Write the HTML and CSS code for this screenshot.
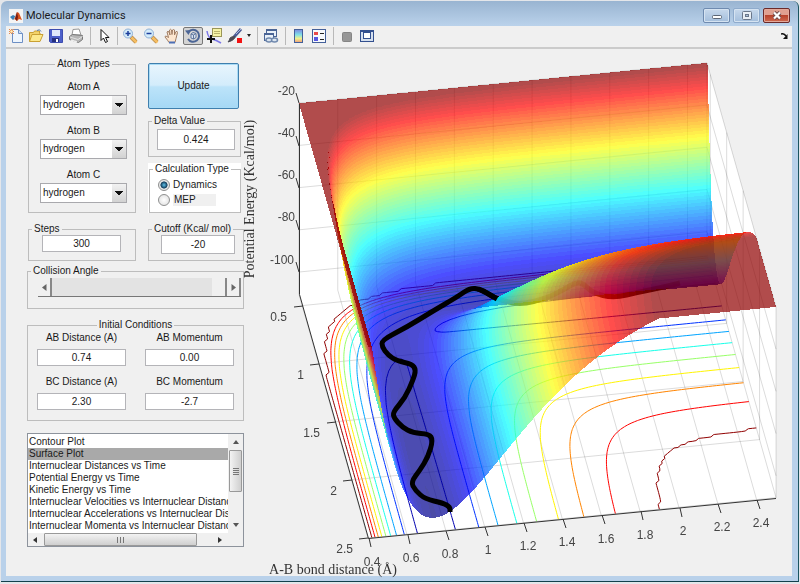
FILE: index.html
```html
<!DOCTYPE html>
<html lang="en">
<head>
    <meta charset="UTF-8">
    <meta name="viewport" content="width=device-width, initial-scale=1.0">
    <title>Molecular Dynamics</title>
    <link rel="stylesheet" href="styles.css">
</head>
<body>
    <div class="window">
        <header class="titlebar">
            <svg class="app-icon" width="14" height="14" viewBox="0 0 14 14">
                <rect width="14" height="14" fill="#f4f4f4"/>
                <path d="M1 8l3-2 2 1 2-4-3 7-1 1z" fill="#3b7fb5"/>
                <path d="M4 11l2-2 2-6 2 1 3 7-3-1-2 2-2-2z" fill="#d9541e"/>
                <path d="M8 3l1 5-1 4-2-2z" fill="#7a1c10"/>
            </svg>
            <h1>Molecular Dynamics</h1>
            <div class="caption-buttons">
                <button class="caption" aria-label="Minimize"><svg width="12" height="9" viewBox="0 0 12 9"><rect x="1.5" y="4.5" width="9" height="3" rx="1" fill="#fff" stroke="#5b6675"/></svg></button>
                <button class="caption dim" aria-label="Maximize"><svg width="12" height="9" viewBox="0 0 12 9"><rect x="1.5" y=".5" width="9" height="8" rx="1" fill="#e8eef5" stroke="#69768a"/><rect x="4.5" y="3.5" width="3" height="2" fill="#a9c0da" stroke="#69768a"/></svg></button>
                <button class="caption close" aria-label="Close"><svg width="12" height="9" viewBox="0 0 12 9"><path d="M3 1.500l6 6M9 1.500l-6 6" stroke="#6b4a4a" stroke-width="4"/><path d="M3 1.500l6 6M9 1.500l-6 6" stroke="#fff" stroke-width="2.2"/></svg></button>
            </div>
        </header>

        <div class="client">
            <nav class="toolbar">
                <div class="tools">
                    <button class="tool" aria-label="New Figure"><svg width="16" height="16" viewBox="0 0 16 16"><path d="M4.500 1.500h6l4 4v9h-10z" fill="#eef5fd" stroke="#6d8fc4"/><path d="M10.500 1.500v4h4" fill="#cfe0f5" stroke="#6d8fc4"/><path d="M3.500 1v5M1 3.500h5M1 1l5 5M6 1l-5 5" stroke="#e58a4e"/><circle cx="3.5" cy="3.5" r="1.2" fill="#fff3c0"/></svg></button>
                    <button class="tool" aria-label="Open File"><svg width="16" height="16" viewBox="0 0 16 16"><path d="M1.500 13.500v-9h4l1-1.500h5v2.500h1" fill="#f3d36a" stroke="#c9a033"/><path d="M1.500 13.500l2.500-7h11l-3 7z" fill="#fce98d" stroke="#c9a033"/><path d="M9 2.500q3-2 4 1" fill="none" stroke="#5b7fae"/></svg></button>
                    <button class="tool" aria-label="Save Figure"><svg width="16" height="16" viewBox="0 0 16 16"><path d="M1.500 1.500h13v13h-12l-1-1z" fill="#4c5fc9" stroke="#3c4cb0"/><rect x="4" y="2" width="8" height="6" fill="#dfe8fa"/><rect x="4" y="10" width="7" height="4" fill="#26307e"/><rect x="8" y="11" width="2" height="3" fill="#fff"/></svg></button>
                    <button class="tool" aria-label="Print Figure"><svg width="16" height="16" viewBox="0 0 16 16"><path d="M4 7l1-5.500 6-.5 2 6z" fill="#fff" stroke="#999"/><path d="M1.500 8.500l3-2 10 1v4l-4 3-9-3z" fill="#b6b6b6" stroke="#777"/><path d="M2 9l8 2.500 4.500-3" fill="none" stroke="#e2e2e2"/><path d="M3 12l6 2" stroke="#eee" stroke-width="1.5"/></svg></button>
                </div>
                <span class="sep"></span>
                <div class="tools">
                    <button class="tool" aria-label="Edit Plot"><svg width="16" height="16" viewBox="0 0 16 16"><path d="M5 1.500v11l2.500-2.500 2 4.500 2-1-2-4h3.500z" fill="#fff" stroke="#111"/></svg></button>
                </div>
                <span class="sep narrow"></span>
                <div class="tools spaced">
                    <button class="tool" aria-label="Zoom In"><svg width="16" height="16" viewBox="0 0 16 16"><path d="M9 9l5 5" stroke="#b98a48" stroke-width="4"/><path d="M9.500 9.500l5 5" stroke="#f5bd62" stroke-width="2.5"/><circle cx="6" cy="5.5" r="4.5" fill="#d4ecfa" stroke="#8fb0d6"/><path d="M3.500 5.500h5M6 3v5" stroke="#1c3e9c" stroke-width="1.5"/></svg></button>
                    <button class="tool" aria-label="Zoom Out"><svg width="16" height="16" viewBox="0 0 16 16"><path d="M9 9l5 5" stroke="#b98a48" stroke-width="4"/><path d="M9.500 9.500l5 5" stroke="#f5bd62" stroke-width="2.5"/><circle cx="6" cy="5.5" r="4.5" fill="#d4ecfa" stroke="#8fb0d6"/><path d="M3.500 5.500h5" stroke="#1c3e9c" stroke-width="1.5"/></svg></button>
                    <button class="tool" aria-label="Pan"><svg width="16" height="16" viewBox="0 0 16 16"><path d="M5 14.500q-1-2-4-5.500 0-2 3.500 .5L3 4q1-1.500 2 0l1 3-.5-5q1-1.500 2 0l.5 4.500.5-4.500q1-1 2 0l0 5 1.500-3.500q1.500-.5 1.500 1l-1.500 6-1 4z" fill="#fde6cf" stroke="#a07c62"/><path d="M5 14.500h6" stroke="#4c6fb5" stroke-width="2"/></svg></button>
                    <button class="tool pressed" aria-label="Rotate 3D"><svg width="16" height="16" viewBox="0 0 16 16"><path d="M3.500 4a6 6 0 1 1-.5 7" fill="none" stroke="#4b6596" stroke-width="2"/><path d="M0 2.500l6-.5-2.500 5z" fill="#4b6596"/><path d="M6 6l2-1.500 3 1v4l-2.500 1.500L6 10zM6 6l2.500 1 2.500-1.500M8.500 7v4" fill="#dce5f2" stroke="#5e779f"/></svg></button>
                    <button class="tool" aria-label="Data Cursor"><svg width="16" height="16" viewBox="0 0 16 16"><path d="M1 3q1 7 5 8t9 4" fill="none" stroke="#7c78e8" stroke-width="1.5"/><rect x="6.5" y=".5" width="9" height="8" fill="#f6f3a4" stroke="#9a9558"/><path d="M8 3.500h6M8 5.500h6" stroke="#b9b36c"/><path d="M5 7v8M1 11h8" stroke="#111" stroke-width="2"/></svg></button>
                    <button class="tool" aria-label="Brush"><svg width="16" height="16" viewBox="0 0 16 16"><path d="M14 1L7 9" stroke="#4a5b94" stroke-width="3"/><path d="M14 1L9 6" stroke="#a9b7dc"/><path d="M8 8.500Q8 12 1 14q2-2 2-4 2-2 5-1.500z" fill="#4b4b55" stroke="#4b4b55"/><rect x="10" y="10" width="5" height="5" fill="#f21212"/></svg></button>
                </div>
                <button class="brush-menu" aria-label="Brush options"><svg width="6" height="4" viewBox="0 0 6 4"><path d="M1 0h4l-2 3z" fill="#222"/></svg></button>
                <span class="sep"></span>
                <div class="tools">
                    <button class="tool" aria-label="Link Plot"><svg width="16" height="16" viewBox="0 0 16 16"><rect x="3.5" y="1.5" width="10" height="7" fill="#eaf1f9" stroke="#4b6596"/><path d="M3 2h11" stroke="#4b6596" stroke-width="2"/><rect x="1.5" y="5.5" width="9" height="7" fill="#eaf1f9" stroke="#4b6596"/><path d="M1 6h10" stroke="#4b6596" stroke-width="2"/><ellipse cx="6" cy="12" rx="3" ry="2" fill="#dbe5f0" stroke="#6f88ad" stroke-width="1.5"/><ellipse cx="11.5" cy="12" rx="3" ry="2" fill="#dbe5f0" stroke="#6f88ad" stroke-width="1.5"/></svg></button>
                </div>
                <span class="sep"></span>
                <div class="tools">
                    <button class="tool" aria-label="Insert Colorbar"><svg width="16" height="16" viewBox="0 0 16 16"><defs><linearGradient id="bar" x2="0" y2="1"><stop offset="0" stop-color="#7f86e0"/><stop offset=".4" stop-color="#7fe0e8"/><stop offset=".7" stop-color="#f2f08a"/><stop offset="1" stop-color="#ef9a7a"/></linearGradient></defs><rect x="3.5" y="1.5" width="8" height="13" fill="url(#bar)" stroke="#44609a"/></svg></button>
                    <button class="tool" aria-label="Insert Legend"><svg width="16" height="16" viewBox="0 0 16 16"><rect x="1.5" y="1.5" width="13" height="13" fill="#f7f9fc" stroke="#44609a"/><rect x="3" y="4" width="4" height="3" fill="#e9494b"/><rect x="3" y="9" width="4" height="4" fill="#5757e2"/><path d="M9 5.500h4M9 11.500h4" stroke="#222"/></svg></button>
                </div>
                <span class="sep"></span>
                <div class="tools">
                    <button class="tool" aria-label="Hide Plot Tools"><svg width="16" height="16" viewBox="0 0 16 16"><rect x="3.5" y="4.5" width="9" height="9" rx="1" fill="#979797" stroke="#858585"/></svg></button>
                    <button class="tool" aria-label="Show Plot Tools"><svg width="16" height="16" viewBox="0 0 16 16"><rect x="1.5" y="2.5" width="13" height="11" fill="#d5e0ee" stroke="#33508f"/><path d="M1 3h14" stroke="#33508f" stroke-width="2"/><rect x="4.5" y="4.5" width="7" height="6" fill="#fff" stroke="#33508f"/></svg></button>
                </div>
                <button class="undock" aria-label="Dock Figure"><svg width="7" height="6" viewBox="0 0 7 6"><path d="M0 1q3-1 5 2" fill="none" stroke="#111" stroke-width="1.5"/><path d="M6.500 1v5H2z" fill="#111"/></svg></button>
            </nav>

            <main class="figure">
                <form class="controls">
                    <div class="setup">
                        <fieldset class="atoms">
                            <legend>Atom Types</legend>
                            <label for="atomA">Atom A</label>
                            <span class="dropdown"><select id="atomA"><option>hydrogen</option></select></span>
                            <label for="atomB">Atom B</label>
                            <span class="dropdown"><select id="atomB"><option>hydrogen</option></select></span>
                            <label for="atomC">Atom C</label>
                            <span class="dropdown"><select id="atomC"><option>hydrogen</option></select></span>
                        </fieldset>

                        <div class="run">
                            <button type="button" class="update">Update</button>
                            <fieldset class="delta">
                                <legend>Delta Value</legend>
                                <div class="field"><input type="text" value="0.424" aria-label="Delta Value"></div>
                            </fieldset>
                            <div class="calc-box">
                                <fieldset class="calc">
                                    <legend>Calculation Type</legend>
                                    <div class="field">
                                        <label><input type="radio" name="calc" checked>Dynamics</label>
                                        <label><input type="radio" name="calc"><span class="mep">MEP</span></label>
                                    </div>
                                </fieldset>
                            </div>
                        </div>

                        <fieldset class="steps">
                            <legend>Steps</legend>
                            <div class="field"><input type="text" value="300" aria-label="Steps"></div>
                        </fieldset>
                        <fieldset class="cutoff">
                            <legend>Cutoff (Kcal/ mol)</legend>
                            <div class="field"><input type="text" value="-20" aria-label="Cutoff (Kcal/ mol)"></div>
                        </fieldset>
                    </div>

                    <fieldset class="angle">
                        <legend>Collision Angle</legend>
                        <div class="field">
                            <div class="slider">
                                <button type="button" aria-label="Decrease angle"><svg width="5" height="7" viewBox="0 0 5 7"><path d="M4.500 0v7L0 3.500z" fill="#666"/></svg></button>
                                <input type="range" min="0" max="180" value="180" aria-label="Collision Angle">
                                <button type="button" aria-label="Increase angle"><svg width="5" height="7" viewBox="0 0 5 7"><path d="M.5 0v7L5 3.500z" fill="#666"/></svg></button>
                            </div>
                        </div>
                    </fieldset>

                    <fieldset class="initial">
                        <legend>Initial Conditions</legend>
                        <div class="conditions">
                            <p><label for="abDist">AB Distance (A)</label><input type="text" id="abDist" value="0.74"></p>
                            <p><label for="abMom">AB Momentum</label><input type="text" id="abMom" value="0.00"></p>
                            <p><label for="bcDist">BC Distance (A)</label><input type="text" id="bcDist" value="2.30"></p>
                            <p><label for="bcMom">BC Momentum</label><input type="text" id="bcMom" value="-2.7"></p>
                        </div>
                    </fieldset>

                    <div class="plot-list">
                        <select size="8" aria-label="Plot type">
                            <option>Contour Plot</option>
                            <option selected>Surface Plot</option>
                            <option>Internuclear Distances vs Time</option>
                            <option>Potential Energy vs Time</option>
                            <option>Kinetic Energy vs Time</option>
                            <option>Internuclear Velocities vs Internuclear Distance</option>
                            <option>Internuclear Accelerations vs Internuclear Distance</option>
                            <option>Internuclear Momenta vs Internuclear Distance</option>
                        </select>
                        <div class="vbar">
                            <svg width="6" height="4" viewBox="0 0 6 4"><path d="M0 4h6L3 0z" fill="#555"/></svg>
                            <span class="vthumb"></span>
                            <svg class="down" width="6" height="4" viewBox="0 0 6 4"><path d="M0 0h6L3 4z" fill="#555"/></svg>
                        </div>
                        <div class="hbar">
                            <svg width="4" height="6" viewBox="0 0 4 6"><path d="M4 0v6L0 3z" fill="#333"/></svg>
                            <span class="hthumb"></span>
                            <svg class="right" width="4" height="6" viewBox="0 0 4 6"><path d="M0 0v6l4-3z" fill="#333"/></svg>
                        </div>
                    </div>
                </form>

                <div class="plot">
                    <canvas id="surface" width="548" height="527"></canvas>
                    <svg class="axes" viewBox="244 49 548 527" preserveAspectRatio="xMinYMin meet">
                        <path class="axis" d="M299.500 104V294.500L368.500 538.500L776 498.500"/>
                        <!-- z ticks -->
                        <path class="axis" d="M299 103l-3-10M299 146l-3-10M299 188l-3-10M299 230l-3-10M299 272l-3-10"/>
                        <!-- BC ticks -->
                        <path class="axis" d="M303 306l-9 1M319 364l-9 1M336 422l-9 1M352 480l-9 1M368 538l-9 1"/>
                        <!-- AB ticks -->
                        <path class="axis" d="M369 538l2 9M408 535l2 9M446 531l3 9M485 527l3 9M524 523l3 9M563 519l3 9M602 515l3 9M641 511l2 9M680 508l2 9M718 504l3 9M757 500l3 9"/>
                        <g class="ticks end">
                            <text x="295" y="95">-20</text>
                            <text x="295" y="137">-40</text>
                            <text x="295" y="179">-60</text>
                            <text x="295" y="221">-80</text>
                            <text x="294" y="264">-100</text>
                            <text x="287" y="321">0.5</text>
                            <text x="304" y="379">1</text>
                            <text x="320" y="437">1.5</text>
                            <text x="337" y="495">2</text>
                            <text x="353" y="553">2.5</text>
                        </g>
                        <g class="ticks">
                            <text x="372" y="566">0.4</text>
                            <text x="411" y="562">0.6</text>
                            <text x="450" y="558">0.8</text>
                            <text x="488" y="554">1</text>
                            <text x="528" y="550">1.2</text>
                            <text x="567" y="546">1.4</text>
                            <text x="606" y="543">1.6</text>
                            <text x="645" y="539">1.8</text>
                            <text x="683" y="535">2</text>
                            <text x="722" y="531">2.2</text>
                            <text x="761" y="527">2.4</text>
                        </g>
                        <text class="axis-label" x="333" y="574">A-B bond distance (Å)</text>
                        <text class="axis-label" transform="translate(254 199) rotate(-90)">Potential Energy (Kcal/mol)</text>
                    </svg>
                </div>
            </main>
        </div>
    </div>

    <script src="surface.js"></script>
</body>
</html>
```

FILE: styles.css
```css
* {
    box-sizing: border-box;
}
body {
    margin: 0;
    height: 100vh;
    padding: 1px 1px 2px 1px;
    background: #e4e6ea;
    font-family: "Liberation Sans", Arial, sans-serif;
    font-size: 10px;
    line-height: 12px;
    color: #1a1a1a;
    overflow: hidden;
}
button {
    padding: 0;
    border: none;
    background: none;
    font: inherit;
    color: inherit;
    display: flex;
    align-items: center;
    justify-content: center;
}
.window {
    height: 100%;
    display: flex;
    flex-direction: column;
    padding: 0 6px 5px 5px;
    background: linear-gradient(#99b4d1, #b9d1ea 24px);
    border-right: 1px solid #1b5560;
    border-bottom: 1px solid #12404c;
    border-radius: 6px 6px 0 0;
}

/* title bar */
.titlebar {
    height: 25px;
    display: flex;
    align-items: center;
    padding: 4px 2px 0 3px;
    gap: 3px;
}
.titlebar h1 {
    flex: 1;
    margin: 0;
    font-family: Roboto, sans-serif;
    font-size: 11px;
    font-weight: 400;
    line-height: 14px;
}
.caption-buttons {
    display: flex;
    gap: 3px;
}
.caption {
    width: 27px;
    height: 15px;
    border: 1px solid #6f8bb0;
    border-radius: 2px;
    background: linear-gradient(#c8d9ec, #a3bedc);
    box-shadow: inset 0 0 0 1px #d5e3f1;
}
.caption.dim {
    border-color: #8fabcc;
}
.caption.close {
    border-color: #6b2a2a;
    background: linear-gradient(#e0a090 45%, #b8432c 50%, #cf6a50);
    box-shadow: inset 0 0 0 1px #e3a99b;
}

/* toolbar */
.client {
    flex: 1;
    min-height: 0;
    display: flex;
    flex-direction: column;
    background: #f0f0f0;
}
.toolbar {
    height: 23px;
    display: flex;
    align-items: center;
    padding-bottom: 1px;
    border-bottom: 2px solid #cbcbcb;
}
.tools {
    display: flex;
}
.tools.spaced {
    gap: 1px;
}
.tool {
    width: 20px;
    height: 18px;
}
.tool.pressed {
    border: 1px solid #777;
    border-radius: 2px;
    background: #d4d4d4;
}
.sep {
    width: 8px;
    height: 18px;
    background: linear-gradient(#b9b9b9, #b9b9b9) center / 1px 100% no-repeat;
}
.sep.narrow {
    width: 6px;
}
.brush-menu {
    width: 8px;
}
.undock {
    margin-left: auto;
    padding-right: 4px;
}

/* controls */
.figure {
    flex: 1;
    min-height: 0;
    display: flex;
}
.controls {
    width: 238px;
    padding: 9px 0 0 21px;
}
fieldset {
    margin: 0;
    padding: 0;
    min-width: 0;
    border: 1px solid #bdbdbd;
}
legend {
    padding: 0 2px;
    margin-left: 3px;
    white-space: nowrap;
}
input[type="text"] {
    display: block;
    width: 100%;
    height: 17px;
    padding: 0;
    border: 1px solid #b4b4b8;
    background: #fff;
    font: inherit;
    color: inherit;
    text-align: center;
}
.setup {
    display: grid;
    grid-template-columns: 108px 93px;
    gap: 10px 12px;
    padding-left: 1px;
}
.atoms {
    display: flex;
    flex-direction: column;
    align-items: center;
    padding: 11px 8px 8px 11px;
}
.atoms legend,
.initial legend {
    margin: 0 auto;
}
.atoms label + .dropdown {
    margin-top: 2px;
}
.dropdown + label {
    margin-top: 10px;
}
.dropdown {
    display: grid;
    grid-template-columns: 1fr 14px;
    width: 100%;
    height: 20px;
    border: 1px solid #a9a9ad;
    background: #fff;
}
.dropdown::after {
    content: "";
    grid-area: 1 / 2;
    pointer-events: none;
    background:
        conic-gradient(from -45deg at 4px 4px, #111 90deg, transparent 0) center / 8px 4px no-repeat,
        linear-gradient(#f2f2f2, #d2d2d2);
}
.dropdown select {
    grid-area: 1 / 1 / 2 / 3;
    appearance: none;
    border: none;
    padding: 0 2px;
    background: none;
    font: inherit;
    color: inherit;
}
.run {
    display: flex;
    flex-direction: column;
    gap: 6px;
    padding-top: 5px;
}
.update {
    width: 91px;
    height: 46px;
    border: 1px solid #3f7fae;
    border-radius: 2px;
    background: linear-gradient(#e8f5fd, #d3ecfb 48%, #bce3f9 52%, #a5d8f5);
    box-shadow: inset 0 0 0 1px #a9dbf5;
}
.delta .field {
    padding: 2px 5px 6px 8px;
}
.delta input {
    height: 21px;
}
.calc-box {
    height: 50px;
    padding-left: 1px;
    background: #fff;
}
.calc {
    height: 50px;
}
.calc .field {
    padding: 2px 8px 0;
}
.calc label {
    display: flex;
    align-items: center;
    gap: 3px;
    height: 15px;
}
.calc input {
    appearance: none;
    width: 12px;
    height: 12px;
    margin: 0;
    border: 1px solid #8e8f8f;
    border-radius: 50%;
    background: radial-gradient(#fff, #dcdcdc);
}
.calc input:checked {
    background: radial-gradient(#5fc2ea, #123d5c 45%, #e8e8e8 55%);
}
.calc .mep {
    flex: 1;
    margin-right: 16px;
    padding: 0 1px;
    background: #f0f0f0;
}
.steps .field {
    padding: 0 14px 8px 13px;
}
.cutoff {
    margin-right: -3px;
}
.cutoff .field {
    padding: 0 8px 6px 12px;
}
.cutoff input {
    height: 19px;
}

.angle {
    margin-top: 4px;
}
.angle .field {
    padding: 1px 2px 11px 10px;
}
.slider {
    display: flex;
    height: 19px;
    border-bottom: 1px solid #777;
}
.slider button {
    width: 14px;
    border-right: 2px solid #888;
    background: #f0f0f0;
}
.slider input {
    flex: 1;
    min-width: 0;
    height: 18px;
    margin: 0;
    appearance: none;
    background: #e3e3e3;
}
.slider input::-webkit-slider-thumb {
    appearance: none;
    width: 15px;
    height: 18px;
    background: #f0f0f0;
    border-right: 2px solid #888;
}

.initial {
    margin-top: 10px;
    padding: 1px 9px 10px 9px;
}
.conditions {
    display: grid;
    grid-template-columns: 1fr 1fr;
    gap: 10px 19px;
}
.conditions p {
    display: flex;
    flex-direction: column;
    gap: 5px;
    margin: 0;
    text-align: center;
}

/* list box */
.plot-list {
    display: grid;
    grid-template-columns: 1fr 15px;
    grid-template-rows: 99px 13px;
    margin-top: 12px;
    border: 1px solid #8d939c;
    background: #f0f0f0;
}
.plot-list select {
    appearance: none;
    min-width: 0;
    width: 100%;
    height: 99px;
    padding: 2px 0 0 0;
    border: none;
    border-radius: 0;
    outline: none;
    background: #fff;
    font: inherit;
    color: inherit;
    overflow: hidden;
}
.plot-list option {
    min-height: 12px;
    padding: 0 1px;
    line-height: 12px;
}
.plot-list option:checked {
    background: #a9a9a9 linear-gradient(#a9a9a9, #a9a9a9);
    color: #1a1a1a;
}
.vbar {
    display: flex;
    flex-direction: column;
    align-items: center;
    padding: 6px 1px;
    gap: 6px;
}
.vbar .down {
    margin-top: auto;
}
.vthumb {
    width: 13px;
    height: 42px;
    border: 1px solid #999;
    border-radius: 1px;
    background:
        repeating-linear-gradient(#777 0 1px, transparent 1px 2px) center / 6px 7px no-repeat,
        linear-gradient(90deg, #f3f3f3, #cfcfcf);
}
.hbar {
    display: flex;
    align-items: center;
    padding: 0 6px 0 5px;
    gap: 7px;
}
.hbar .right {
    margin-left: auto;
}
.hthumb {
    width: 153px;
    height: 13px;
    border: 1px solid #999;
    border-radius: 1px;
    background:
        repeating-linear-gradient(90deg, #777 0 1px, transparent 1px 3px) center / 8px 6px no-repeat,
        linear-gradient(#f3f3f3, #cfcfcf);
}

/* plot: svg axes stacked on the canvas */
.plot {
    flex: 1;
    min-width: 0;
    display: grid;
}
.plot canvas,
.plot svg {
    grid-area: 1 / 1;
    width: 100%;
    height: 100%;
    min-height: 0;
    object-fit: contain;
    object-position: left top;
    overflow: visible;
}
.axis {
    fill: none;
    stroke: #333;
    stroke-width: 1;
}
.ticks {
    font-size: 12px;
    fill: #444;
    text-anchor: middle;
}
.ticks.end {
    text-anchor: end;
}
.axis-label {
    font-family: "Liberation Serif", serif;
    font-size: 14px;
    fill: #333;
    text-anchor: middle;
}
```

FILE: surface.js
```js
// LEPS potential energy surface for a collinear A + BC system
const canvas = document.getElementById('surface');
const ctx = canvas.getContext('2d');

const RMIN = 0.4, RMAX = 2.5, ZMIN = -110.4, CUTOFF = -20;
const D = 104, BETA = 2.0, RE = 0.742, SATO = 0.18;

function pair(r) {
    const e = Math.exp(-BETA * (r - RE));
    const singlet = D * (e * e - 2 * e) * (1 + SATO);
    const triplet = D / 2 * (e * e + 2 * e) * (1 - SATO);
    return { q: (singlet + triplet) / 2, j: (singlet - triplet) / 2 };
}

function energy(x, y) {
    const a = pair(x), b = pair(y), c = pair(x + y);
    const s = (a.j - b.j) ** 2 + (b.j - c.j) ** 2 + (c.j - a.j) ** 2;
    const v = (a.q + b.q + c.q - Math.sqrt(s / 2)) / (1 + SATO);
    return Math.min(v, CUTOFF);
}

function project(x, y, z) {
    return [
        124 + 194.3 * (x - RMIN) - 32.9 * (RMAX - y),
        489 - 19.2 * (x - RMIN) - 116.2 * (RMAX - y) - 2.11 * (z - ZMIN)
    ];
}

function jet(t) {
    t = Math.round(Math.max(0, Math.min(1, t)) * 63) / 63;
    const f = c => 255 * Math.max(0, Math.min(1, 1.5 - Math.abs(4 * t - c)));
    return [f(3), f(2), f(1)];
}

const colour = z => jet((z + 104.5) / 85.7);

function line(points) {
    ctx.beginPath();
    points.forEach(p => ctx.lineTo(p[0], p[1]));
    ctx.stroke();
}

function drawBox() {
    const corners = [
        project(RMIN, RMIN, CUTOFF), project(RMAX, RMIN, CUTOFF), project(RMAX, RMAX, CUTOFF),
        project(RMAX, RMAX, ZMIN), project(RMIN, RMAX, ZMIN), project(RMIN, RMIN, ZMIN)
    ];
    ctx.fillStyle = '#fff';
    ctx.beginPath();
    corners.forEach(p => ctx.lineTo(p[0], p[1]));
    ctx.fill();

    ctx.strokeStyle = 'rgba(0, 0, 0, 0.14)';
    for (let x = 0.4; x < 2.51; x += 0.2) {
        line([project(x, RMAX, ZMIN), project(x, RMIN, ZMIN), project(x, RMIN, CUTOFF)]);
    }
    for (let y = 0.5; y < 2.51; y += 0.5) {
        line([project(RMIN, y, ZMIN), project(RMAX, y, ZMIN), project(RMAX, y, CUTOFF)]);
    }
    for (let z = -100; z <= -20; z += 20) {
        line([project(RMIN, RMIN, z), project(RMAX, RMIN, z), project(RMAX, RMAX, z)]);
    }
    line([project(RMAX, RMIN, CUTOFF), project(RMAX, RMIN, ZMIN), project(RMAX, RMAX, ZMIN)]);
}

function sample(n) {
    const axis = i => RMIN + (RMAX - RMIN) * i / n;
    const z = [];
    for (let i = 0; i <= n; i++) {
        z.push([]);
        for (let j = 0; j <= n; j++) {
            z[i].push(energy(axis(i), axis(j)));
        }
    }
    return { n, axis, z };
}

function drawContour({ n, axis, z }, level) {
    ctx.strokeStyle = `rgb(${colour(level).join()})`;
    ctx.beginPath();
    for (let i = 0; i < n; i++) {
        for (let j = 0; j < n; j++) {
            const sq = [[i, j], [i + 1, j], [i + 1, j + 1], [i, j + 1]];
            const hits = [];
            for (let k = 0; k < 4; k++) {
                const [a, b] = sq[k], [p, q] = sq[(k + 1) % 4];
                const z0 = z[a][b], z1 = z[p][q];
                if ((z0 < level) !== (z1 < level)) {
                    const t = (level - z0) / (z1 - z0);
                    hits.push(project(axis(a + (p - a) * t), axis(b + (q - b) * t), ZMIN));
                }
            }
            for (let k = 0; k + 1 < hits.length; k += 2) {
                ctx.moveTo(...hits[k]);
                ctx.lineTo(...hits[k + 1]);
            }
        }
    }
    ctx.stroke();
}

// fill one triangle into the image with the energy interpolated per pixel
function triangle(img, a, b, c) {
    const area = (b[0] - a[0]) * (c[1] - a[1]) - (c[0] - a[0]) * (b[1] - a[1]);
    if (area === 0) return;
    const ys = [a[1], b[1], c[1]];
    const y0 = Math.ceil(Math.min(...ys) - 0.5), y1 = Math.ceil(Math.max(...ys) - 0.5);
    for (let y = y0; y < y1; y++) {
        const py = y + 0.5, xs = [];
        [[a, b], [b, c], [c, a]].forEach(([p, q]) => {
            // order the ends so a shared edge gives the same crossing both times
            if (p[1] > q[1]) [p, q] = [q, p];
            if (p[1] <= py && q[1] > py) {
                xs.push(p[0] + (q[0] - p[0]) * (py - p[1]) / (q[1] - p[1]));
            }
        });
        if (xs.length < 2) continue;
        const x0 = Math.ceil(Math.min(...xs) - 0.5), x1 = Math.ceil(Math.max(...xs) - 0.5);
        for (let x = x0; x < x1; x++) {
            const px = x + 0.5;
            const v = ((px - a[0]) * (c[1] - a[1]) - (c[0] - a[0]) * (py - a[1])) / area;
            const w = ((b[0] - a[0]) * (py - a[1]) - (px - a[0]) * (b[1] - a[1])) / area;
            const rgb = colour(a[2] + v * (b[2] - a[2]) + w * (c[2] - a[2]));
            const o = 4 * (y * img.width + x);
            for (let k = 0; k < 3; k++) {
                img.data[o + k] = 0.7 * rgb[k] + 0.3 * img.data[o + k];
            }
            img.data[o + 3] = 255;
        }
    }
}

function drawRows({ n, axis, z }, from, to) {
    const img = ctx.getImageData(0, 0, canvas.width, canvas.height);
    const point = (i, j) => [...project(axis(i), axis(j), z[i][j]), z[i][j]];
    for (let j = from; j < to; j++) {
        for (let i = n - 1; i >= 0; i--) {
            const a = point(i, j), b = point(i + 1, j), c = point(i + 1, j + 1), d = point(i, j + 1);
            triangle(img, a, b, c);
            triangle(img, a, c, d);
        }
    }
    ctx.putImageData(img, 0, 0);
}

function drawPath(points) {
    ctx.strokeStyle = '#000';
    ctx.lineWidth = 5;
    ctx.lineJoin = 'round';
    ctx.beginPath();
    ctx.moveTo(...points[0]);
    for (let i = 1; i < points.length - 1; i++) {
        const [x, y] = points[i], [nx, ny] = points[i + 1];
        ctx.quadraticCurveTo(x, y, (x + nx) / 2, (y + ny) / 2);
    }
    ctx.lineTo(...points[points.length - 1]);
    ctx.stroke();
    ctx.lineWidth = 1;
}

// trajectory: the approach runs behind the ridge, the rest in front
const approach = [
    [436, 234], [416, 239], [395, 243], [370, 249], [348, 244], [336, 231], [319, 241],
    [303, 249], [276, 256], [253, 250], [243, 244], [234, 240]
];
const vibration = [
    [253, 250], [243, 244], [236, 240], [226, 239], [213, 248], [189, 262], [163, 278], [138, 291],
    [138, 298], [144, 306], [153, 312], [168, 315], [172, 321], [169, 331], [161, 349],
    [149, 363], [150, 369], [158, 378], [169, 384], [185, 385], [189, 391], [184, 408],
    [176, 421], [167, 433], [171, 441], [181, 450], [199, 454], [206, 458], [206, 463]
];

drawBox();
const coarse = sample(105);
for (let level = -100; level <= -30; level += 10) {
    drawContour(coarse, level);
}
drawContour(coarse, CUTOFF - 0.01);

const fine = sample(210);
drawRows(fine, 0, 48);
drawPath(approach);
drawRows(fine, 48, fine.n);
drawPath(vibration);
```
